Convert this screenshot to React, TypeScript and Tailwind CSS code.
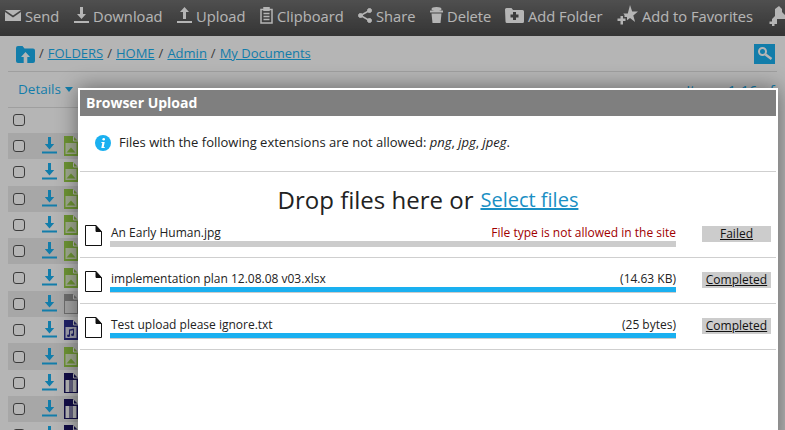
import type { ReactNode } from 'react'

const font = { fontFamily: '"Open Sans", sans-serif' }

function ToolItem({ icon, label, w }: { icon: ReactNode; label: string; w: string }) {
  return (
    <div className={`flex shrink-0 items-center gap-1 ${w}`}>
      {icon}
      <span className="mt-[1px] whitespace-nowrap">{label}</span>
    </div>
  )
}

function DownloadIcon() {
  return (
    <svg width="15" height="18" viewBox="0 0 15 18" className="shrink-0" fill="#1ab0f0">
      <path d="M6 0h3v7h3.2L7.500 12.500 2.800 7H6z" />
      <rect x="0" y="14.500" width="15" height="2" />
    </svg>
  )
}

function FileTypeIcon({ kind }: { kind: string }) {
  const color = kind === 'image' ? '#98d048' : kind === 'blank' ? '#9a9a9a' : kind === 'music' ? '#2e3192' : '#1b1464'
  return (
    <svg width="14" height="20" viewBox="0 0 14 20" className="shrink-0">
      <path d="M0 0h9l5 5v15H0z" fill={color} />
      <path d="M9.500 0.500v4.500h4.500" fill="none" stroke="#fff" strokeWidth="1" />
      {kind === 'image' && (
        <>
          <rect x="1.500" y="7" width="11" height="11" fill="#e2efcc" />
          <path d="M2.500 16.500l4.500-5 4.500 5z" fill={color} />
        </>
      )}
      {kind === 'blank' && <rect x="1" y="7" width="12" height="12" fill="#e6e6e6" />}
      {kind === 'music' && (
        <>
          <rect x="1.500" y="7" width="11" height="11" fill="#dfe0f2" />
          <path d="M5 9.500l5-1v6.200a1.500 1.200 0 1 1-1-1.100V10.200l-3 .6v5a1.500 1.200 0 1 1-1-1.100z" fill={color} />
        </>
      )}
      {kind === 'zip' && (
        <>
          <rect x="1.500" y="7" width="4" height="12" fill="#fff" />
          <rect x="8.500" y="7" width="4" height="12" fill="#fff" />
          <rect x="6" y="7" width="2" height="12" fill="#8f8bb8" />
        </>
      )}
    </svg>
  )
}

const rows = ['image', 'image', 'image', 'image', 'image', 'image', 'blank', 'music', 'image', 'zip', 'zip', 'zip']

function DocIcon() {
  return (
    <svg width="17" height="21" viewBox="0 0 17 21" className="shrink-0" fill="none" stroke="#111" strokeWidth="1">
      <path d="M0.500 0.500h10.500l5.500 6v14h-16z" />
      <path d="M11 0.500v6h5.500" fill="#111" />
    </svg>
  )
}

function UploadRow({ name, note, noteClass, status, bar }: { name: string; note: string; noteClass: string; status: string; bar: string }) {
  return (
    <div className="flex h-[46px] items-start border-b border-[#cfcfcf] pl-[5px] pr-[5px] pt-[12px]">
      <div className="mt-[1px] w-[25px]">
        <DocIcon />
      </div>
      <div className="w-[566px]">
        <div className="flex h-[17px] items-center justify-between pl-[1px] text-[12px] text-[#222]">
          <span>{name}</span>
          <span className={noteClass}>{note}</span>
        </div>
        <div className={`h-[6px] ${bar}`} />
      </div>
      <div className="ml-[26px] mt-[2px] flex h-[16px] w-[69px] items-center justify-center bg-[#cccccc] text-[12px] text-[#111] underline">
        {status}
      </div>
    </div>
  )
}

export default function App() {
  return (
    <div className="relative h-[430px] w-[785px] overflow-hidden bg-white" style={font}>
      {/* Toolbar */}
      <div className="flex h-9 items-center overflow-hidden bg-gradient-to-b from-[#707070] to-[#4a4a4a] pb-[5px] pl-[5px] text-[14.700px] text-white">
        <ToolItem
          w="w-[69px]"
          label="Send"
          icon={
            <svg width="16" height="11" viewBox="0 0 16 11" fill="#fff">
              <path d="M0 0h16L8 5.500z" />
              <path d="M0 2l8 5.500L16 2v9H0z" />
            </svg>
          }
        />
        <ToolItem
          w="w-[103px]"
          label="Download"
          icon={
            <svg width="15" height="16" viewBox="0 0 15 16" fill="#fff">
              <path d="M6 0h3v7h3L7.500 12 3 7h3z" />
              <rect y="14" width="15" height="2" />
            </svg>
          }
        />
        <ToolItem
          w="w-[83px]"
          label="Upload"
          icon={
            <svg width="15" height="16" viewBox="0 0 15 16" fill="#fff">
              <path d="M6 12h3V5h3L7.500 0 3 5h3z" />
              <rect y="14" width="15" height="2" />
            </svg>
          }
        />
        <ToolItem
          w="w-[98px]"
          label="Clipboard"
          icon={
            <svg width="13" height="17" viewBox="0 0 13 17" fill="none" stroke="#fff" strokeWidth="1.500">
              <rect x="1" y="2.500" width="11" height="13.500" />
              <path d="M3.500 6.500h6M3.500 9.500h6M3.500 12.500h6" />
              <path d="M4 0.800h5v2.500H4z" fill="#fff" />
            </svg>
          }
        />
        <ToolItem
          w="w-[72px]"
          label="Share"
          icon={
            <svg width="14" height="15" viewBox="0 0 14 15" fill="#fff" stroke="#fff">
              <circle cx="11.500" cy="2.500" r="2" />
              <circle cx="2.500" cy="7.500" r="2" />
              <circle cx="11.500" cy="12.500" r="2" />
              <path d="M11.500 2.500l-9 5 9 5" fill="none" strokeWidth="1.500" />
            </svg>
          }
        />
        <ToolItem
          w="w-[75px]"
          label="Delete"
          icon={
            <svg width="13" height="16" viewBox="0 0 13 16" fill="#fff">
              <ellipse cx="6.500" cy="2" rx="5" ry="2" />
              <path d="M0 3.500h13v2H0z" />
              <path d="M1.500 6.500h10l-1 9.500h-8z" />
            </svg>
          }
        />
        <ToolItem
          w="w-[112px]"
          label="Add Folder"
          icon={
            <svg width="19" height="15" viewBox="0 0 19 15">
              <path d="M0 1.500q0-1.500 1.500-1.500h5l1.500 2h9.500q1.500 0 1.500 1.500V13.500q0 1.500-1.500 1.500h-15.500q-1.500 0-1.500-1.500z" fill="#fff" />
              <path d="M8 4h3v2.500h2.500v3H11V12H8V9.500H5.500v-3H8z" fill="#555" />
            </svg>
          }
        />
        <ToolItem
          w="w-[152px]"
          label="Add to Favorites"
          icon={
            <svg width="21" height="20" viewBox="0 0 21 20" fill="#fff">
              <path d="M13 0l2.200 6.500H21l-4.700 4 1.800 6.500-5.100-4-3 2.200v-3.200H7.500v-2l-1.200-1.500 4.500-.100z" />
              <path d="M3.500 11h2.500v2.500h2.500v2.500H6v3.500H3.500V16H0.500v-2.500h3z" />
            </svg>
          }
        />
        <svg width="20" height="20" viewBox="0 0 20 20" className="shrink-0" fill="#fff">
          <path d="M10 0l3 3v3l4 4v3H8v3H3v-3l3-3V3z" />
          <path d="M3 13h2.500v2.500H8V18H5.500v2H3v-2H0.500v-2.500H3z" />
        </svg>
      </div>

      {/* Breadcrumb */}
      <div className="mx-2 flex h-9 items-center justify-between border-b border-[#e0e0e0] pl-2 pr-[2px] text-[13px] text-[#1ab0f0]">
        <div className="flex items-center gap-[4px] pt-[1px]">
          <svg width="19" height="17" viewBox="0 0 19 17" fill="#1ab0f0">
            <path d="M0 2q0-2 2-2h4.500l2 2.500H17q2 0 2 2V15q0 2-2 2H2q-2 0-2-2z" />
            <path d="M9.500 6l4.500 5h-2.700v6H7.700v-6H5z" fill="#fff" />
          </svg>
          <span className="text-[#555]">/</span>
          <a className="underline">FOLDERS</a>
          <span className="text-[#555]">/</span>
          <a className="underline">HOME</a>
          <span className="text-[#555]">/</span>
          <a className="underline">Admin</a>
          <span className="text-[#555]">/</span>
          <a className="underline">My Documents</a>
        </div>
        <div className="flex h-[20px] w-[21px] items-center justify-center bg-[#1ab0f0]">
          <svg width="16" height="16" viewBox="0 0 16 16" fill="none" stroke="#fff">
            <circle cx="5.500" cy="5.500" r="3.500" strokeWidth="2" />
            <path d="M8.500 8.500l6 4.500" strokeWidth="2.500" />
          </svg>
        </div>
      </div>

      {/* Details row */}
      <div className="mx-2 flex h-9 items-center justify-between overflow-hidden border-b border-[#e0e0e0] pl-[10px] text-[13.500px] text-[#1ab0f0]">
        <div className="flex items-center gap-1">
          Details
          <span className="h-0 w-0 border-x-[4px] border-t-[5px] border-x-transparent border-t-[#1ab0f0]" />
        </div>
        <span className="mr-[-18px] mt-[3px] whitespace-nowrap text-[14.500px]">Items 1-16 of 16</span>
      </div>

      {/* File list */}
      <div className="mx-2">
        <div className="flex h-[25px] items-center pb-[2px] pl-[5px]">
          <span className="h-[12px] w-[12px] rounded-[3px] border border-[#555] bg-white" />
        </div>
        {rows.map((kind, i) => (
          <div key={i} className={`flex h-[26.300px] items-center pl-[5px] ${i % 2 === 0 ? 'bg-[#ececec]' : ''}`}>
            <span className="h-[12px] w-[12px] rounded-[3px] border border-[#555] bg-white" />
            <div className="ml-[17px] mr-[7px]">
              <DownloadIcon />
            </div>
            <FileTypeIcon kind={kind} />
          </div>
        ))}
      </div>

      {/* Dim layer */}
      <div className="absolute inset-0 bg-black/[0.29]" />

      {/* Modal */}
      <div className="absolute left-[78px] top-[88px] h-[360px] w-[700px] border-2 border-white bg-white shadow-[0_0_20px_rgba(0,0,0,0.45)]">
        <div className="flex h-[26px] items-center bg-[#7f7f7f] pb-[2px] pl-[6px] text-[14px] font-bold text-white">Browser Upload</div>
        <div className="flex h-[56px] items-center gap-[8px] border-b border-[#cfcfcf] pb-[1px] pl-[15px] text-[13px] text-[#222]">
          <svg width="16" height="16" viewBox="0 0 16 16">
            <circle cx="8" cy="8" r="8" fill="#1ab0f0" />
            <circle cx="8.700" cy="4.200" r="1.300" fill="#fff" />
            <path d="M6.500 7h3.200l-1 5h1v1H6.300l1-5h-1z" fill="#fff" />
          </svg>
          <span>
            Files with the following extensions are not allowed: <em>png</em>, <em>jpg</em>, <em>jpeg</em>.
          </span>
        </div>
        <div className="flex h-[40px] items-center justify-center pt-[16px] text-[24px] text-[#222]">
          <span>Drop files here or</span>
          <a className="ml-[7px] text-[20px] text-[#1a8fc4] underline">Select files</a>
        </div>
        <UploadRow
          name="An Early Human.jpg"
          note="File type is not allowed in the site"
          noteClass="text-[#a00000]"
          status="Failed"
          bar="bg-[#cccccc]"
        />
        <UploadRow
          name="implementation plan 12.08.08 v03.xlsx"
          note="(14.63 KB)"
          noteClass="text-[#222]"
          status="Completed"
          bar="border-b border-[#cccccc] bg-[#1ab0f0]"
        />
        <UploadRow
          name="Test upload please ignore.txt"
          note="(25 bytes)"
          noteClass="text-[#222]"
          status="Completed"
          bar="border-b border-[#cccccc] bg-[#1ab0f0]"
        />
      </div>
    </div>
  )
}
